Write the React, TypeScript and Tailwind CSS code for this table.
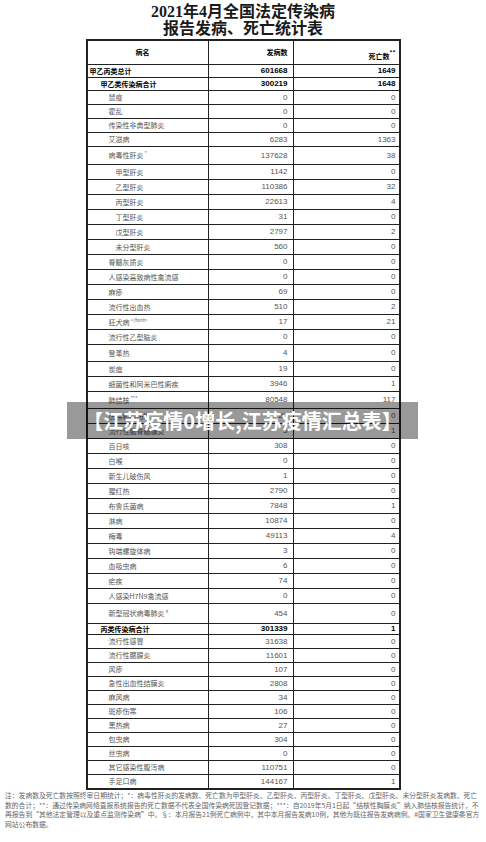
import React from "react";

type Row = {
  name: string;
  cases: string;
  deaths: string;
  level: 0 | 1 | 2 | 3;
  h: string;
  bold?: boolean;
  sup?: string;
};

const rows: Row[] = [
  { name: "甲乙丙类总计", cases: "601668", deaths: "1649", level: 0, h: "h-[13px]", bold: true },
  { name: "甲乙类传染病合计", cases: "300219", deaths: "1648", level: 1, h: "h-[13px]", bold: true },
  { name: "鼠疫", cases: "0", deaths: "0", level: 2, h: "h-[14px]" },
  { name: "霍乱", cases: "0", deaths: "0", level: 2, h: "h-[14px]" },
  { name: "传染性非典型肺炎", cases: "0", deaths: "0", level: 2, h: "h-[14px]" },
  { name: "艾滋病", cases: "6283", deaths: "1363", level: 2, h: "h-[14px]" },
  { name: "病毒性肝炎", cases: "137628", deaths: "38", level: 2, h: "h-[18px]", sup: "*" },
  { name: "甲型肝炎", cases: "1142", deaths: "0", level: 3, h: "h-[15px]" },
  { name: "乙型肝炎", cases: "110386", deaths: "32", level: 3, h: "h-[15px]" },
  { name: "丙型肝炎", cases: "22613", deaths: "4", level: 3, h: "h-[15px]" },
  { name: "丁型肝炎", cases: "31", deaths: "0", level: 3, h: "h-[15px]" },
  { name: "戊型肝炎", cases: "2797", deaths: "2", level: 3, h: "h-[15px]" },
  { name: "未分型肝炎", cases: "560", deaths: "0", level: 3, h: "h-[15px]" },
  { name: "脊髓灰质炎", cases: "0", deaths: "0", level: 2, h: "h-[15px]" },
  { name: "人感染高致病性禽流感", cases: "0", deaths: "0", level: 2, h: "h-[15px]" },
  { name: "麻疹", cases: "69", deaths: "0", level: 2, h: "h-[15px]" },
  { name: "流行性出血热", cases: "510", deaths: "2", level: 2, h: "h-[15px]" },
  { name: "狂犬病", cases: "17", deaths: "21", level: 2, h: "h-[15px]", sup: "</font>" },
  { name: "流行性乙型脑炎", cases: "0", deaths: "0", level: 2, h: "h-[15px]" },
  { name: "登革热", cases: "4", deaths: "0", level: 2, h: "h-[17px]" },
  { name: "炭疽", cases: "19", deaths: "0", level: 2, h: "h-[15px]" },
  { name: "细菌性和阿米巴性痢疾", cases: "3946", deaths: "1", level: 2, h: "h-[15px]" },
  { name: "肺结核", cases: "80548", deaths: "117", level: 2, h: "h-[17px]", sup: "***" },
  { name: "伤寒和副伤寒", cases: "22", deaths: "0", level: 2, h: "h-[15px]" },
  { name: "流行性脑脊髓膜炎", cases: "3", deaths: "1", level: 2, h: "h-[15px]" },
  { name: "百日咳", cases: "308", deaths: "0", level: 2, h: "h-[15px]" },
  { name: "白喉", cases: "0", deaths: "0", level: 2, h: "h-[15px]" },
  { name: "新生儿破伤风", cases: "1", deaths: "0", level: 2, h: "h-[15px]" },
  { name: "猩红热", cases: "2790", deaths: "0", level: 2, h: "h-[15px]" },
  { name: "布鲁氏菌病", cases: "7848", deaths: "1", level: 2, h: "h-[15px]" },
  { name: "淋病", cases: "10874", deaths: "0", level: 2, h: "h-[15px]" },
  { name: "梅毒", cases: "49113", deaths: "4", level: 2, h: "h-[15px]" },
  { name: "钩端螺旋体病", cases: "3", deaths: "0", level: 2, h: "h-[15px]" },
  { name: "血吸虫病", cases: "6", deaths: "0", level: 2, h: "h-[15px]" },
  { name: "疟疾", cases: "74", deaths: "0", level: 2, h: "h-[15px]" },
  { name: "人感染H7N9禽流感", cases: "0", deaths: "0", level: 2, h: "h-[15px]" },
  { name: "新型冠状病毒肺炎", cases: "454", deaths: "0", level: 2, h: "h-[20px]", sup: "#" },
  { name: "丙类传染病合计", cases: "301339", deaths: "1", level: 1, h: "h-[11px]", bold: true },
  { name: "流行性感冒", cases: "31638", deaths: "0", level: 2, h: "h-[14px]" },
  { name: "流行性腮腺炎", cases: "11601", deaths: "0", level: 2, h: "h-[14px]" },
  { name: "风疹", cases: "107", deaths: "0", level: 2, h: "h-[14px]" },
  { name: "急性出血性结膜炎", cases: "2808", deaths: "0", level: 2, h: "h-[14px]" },
  { name: "麻风病", cases: "34", deaths: "0", level: 2, h: "h-[14px]" },
  { name: "斑疹伤寒", cases: "106", deaths: "0", level: 2, h: "h-[14px]" },
  { name: "黑热病", cases: "27", deaths: "0", level: 2, h: "h-[14px]" },
  { name: "包虫病", cases: "304", deaths: "0", level: 2, h: "h-[14px]" },
  { name: "丝虫病", cases: "0", deaths: "0", level: 2, h: "h-[14px]" },
  { name: "其它感染性腹泻病", cases: "110751", deaths: "0", level: 2, h: "h-[14px]" },
  { name: "手足口病", cases: "144167", deaths: "1", level: 2, h: "h-[13px]" },
];

const indent = {
  0: "pl-[2px]",
  1: "pl-[13px]",
  2: "pl-[21px]",
  3: "pl-[28px]",
};

const cjk = "font-['Noto_Sans_CJK_SC',sans-serif]";

const TableRow = ({ row, last }: { row: Row; last: boolean }) => (
  <div
    className={`grid grid-cols-[121px_85px_105px] ${row.h} ${last ? "" : "border-b border-[#222]"} ${
      row.bold ? "text-black font-bold" : "text-[#555]"
    }`}
  >
    <div className={`flex items-center border-r border-[#222] ${indent[row.level]} ${cjk} text-[7px] leading-none`}>
      <span className="whitespace-nowrap">
        {row.name}
        {row.sup && <sup className="text-[5px] font-normal text-[#666] ml-[1px] relative -top-[3px]">{row.sup}</sup>}
      </span>
    </div>
    <div className="flex items-center justify-end pr-[5px] border-r border-[#222] font-['Liberation_Sans',sans-serif] text-[8px] leading-none">
      {row.cases}
    </div>
    <div className="flex items-center justify-end pr-[3px] font-['Liberation_Sans',sans-serif] text-[8px] leading-none">
      {row.deaths}
    </div>
  </div>
);

export default function App() {
  return (
    <div className="relative w-[486px] h-[842px] bg-white overflow-hidden">
      <div className="pt-[3px] text-center font-['Liberation_Serif','Noto_Sans_CJK_SC',serif] font-bold text-[16px] leading-[17px] text-[#1a1a1a]">
        <div>2021年4月全国法定传染病</div>
        <div>报告发病、死亡统计表</div>
      </div>

      <div className="mx-auto mt-[2px] w-[315px] border-2 border-[#222]">
        <div className="grid grid-cols-[121px_85px_105px] h-[24px] border-b border-[#222] font-bold text-black">
          <div className={`flex items-center justify-center border-r border-[#222] ${cjk} text-[7px] pr-[10px]`}>
            病名
          </div>
          <div className={`flex items-center justify-end pr-[5px] border-r border-[#222] ${cjk} text-[7px]`}>
            发病数
          </div>
          <div className={`flex items-end justify-end pr-[3px] pb-[4px] ${cjk} text-[7px] leading-none`}>
            <span>
              死亡数
              <sup className="text-[6px] relative -top-[4px]">**</sup>
            </span>
          </div>
        </div>
        {rows.map((r, i) => (
          <TableRow key={r.name} row={r} last={i === rows.length - 1} />
        ))}
      </div>

      <p className={`px-[5px] pt-[1px] ${cjk} text-[6.8px] leading-[9.5px] text-[#666]`}>
        注：发病数及死亡数按照终审日期统计；*：病毒性肝炎的发病数、死亡数为甲型肝炎、乙型肝炎、丙型肝炎、丁型肝炎、戊型肝炎、未分型肝炎发病数、死亡数的合计；**：通过传染病网络直报系统报告的死亡数据不代表全国传染病死因登记数据；***：自2019年5月1日起“结核性胸膜炎”纳入肺结核报告统计，不再报告到“其他法定管理以及重点监测传染病”中。§：本月报告21例死亡病例中，其中本月报告发病10例，其他为既往报告发病病例。#国家卫生健康委官方网站公布数据。
      </p>

      <div className="absolute left-[67px] top-[402px] w-[351px] h-[37px] bg-black/40 flex items-center justify-center">
        <span className={`${cjk} font-bold text-[20px] leading-none text-white whitespace-nowrap`}>
          【江苏疫情0增长,江苏疫情汇总表】
        </span>
      </div>
    </div>
  );
}
